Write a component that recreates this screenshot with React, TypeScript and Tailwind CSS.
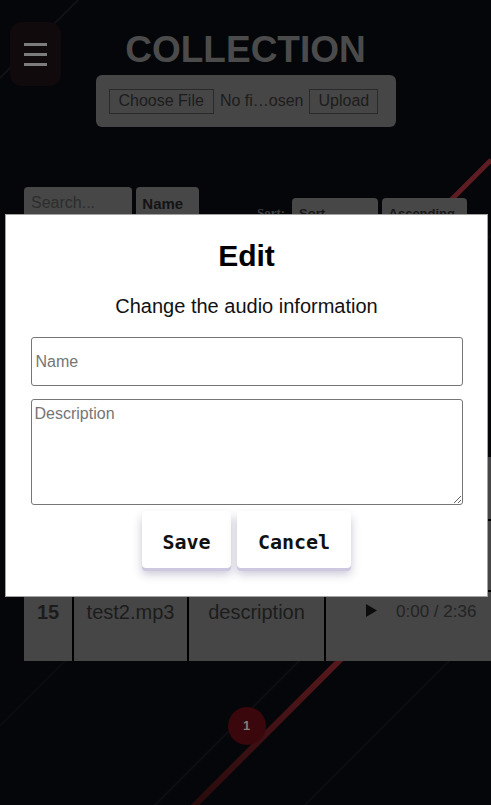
import React from "react";

const sans = { fontFamily: '"Liberation Sans", Arial, sans-serif' };

function Backdrop() {
  // diagonal streaks of the page background
  return (
    <svg className="absolute inset-0 h-full w-full" viewBox="0 0 491 805" preserveAspectRatio="none">
      <defs>
        <linearGradient id="streak" x1="360" y1="640" x2="185" y2="815" gradientUnits="userSpaceOnUse">
          <stop offset="0" stopColor="#5e1a1e" />
          <stop offset="1" stopColor="#260a0c" />
        </linearGradient>
      </defs>
      <line x1="0" y1="78" x2="80" y2="-2" stroke="#111116" strokeWidth="2" />
      <line x1="470" y1="0" x2="491" y2="-21" stroke="#111116" strokeWidth="2" />
      <line x1="0" y1="726" x2="726" y2="0" stroke="#0c0c10" strokeWidth="2" />
      <line x1="150" y1="810" x2="960" y2="0" stroke="#0e0e12" strokeWidth="2" />
      <line x1="300" y1="810" x2="1110" y2="0" stroke="#0d0d11" strokeWidth="2" />
      <line x1="491" y1="160" x2="300" y2="351" stroke="#5c1c21" strokeWidth="5" />
      <line x1="360" y1="640" x2="185" y2="815" stroke="url(#streak)" strokeWidth="6" />
    </svg>
  );
}

function EditModal() {
  return (
    <div className="absolute left-[5px] top-[214px] flex h-[383px] w-[483px] flex-col items-center border border-[#a3a3a3] bg-white" style={sans}>
      <h2 className="mt-[24px] text-[30px] font-bold leading-[34px] text-black">Edit</h2>
      <p className="mt-[22px] text-[20px] leading-[23px] text-[#111]">Change the audio information</p>
      <input
        placeholder="Name"
        className="mt-[19px] h-[49px] w-[432px] rounded-[3px] border border-[#767676] px-[4px] text-[16px] placeholder:text-[#757575]"
      />
      <textarea
        placeholder="Description"
        className="mt-[13px] h-[106px] w-[432px] rounded-[3px] border border-[#767676] px-[3px] py-[2px] text-[16px] placeholder:text-[#757575]"
      />
      <div className="mt-[6px] flex gap-[6px]" style={{ fontFamily: '"DejaVu Sans Mono", "Liberation Mono", monospace' }}>
        <button className="h-[57px] w-[89px] rounded-[4px] bg-white pt-[5px] text-[20px] font-bold text-[#111] shadow-[0_3px_0_#cdc8df,0_6px_10px_rgba(70,60,110,0.3)]">
          Save
        </button>
        <button className="h-[57px] w-[114px] rounded-[4px] bg-white pt-[5px] text-[20px] font-bold text-[#111] shadow-[0_3px_0_#cdc8df,0_6px_10px_rgba(70,60,110,0.3)]">
          Cancel
        </button>
      </div>
    </div>
  );
}

function Row({ id, name }: { id?: number; name?: string }) {
  return (
    <div className="flex h-[69px] text-[20px] leading-[24px] text-[#1c1c1c]">
      <div className="w-[48px] pt-[8px] text-center font-bold">{id}</div>
      <div className="w-[115px] border-l-2 border-black pt-[8px] text-center">{name}</div>
      <div className="w-[137px] border-l-2 border-black pt-[8px] text-center">{name ? "description" : ""}</div>
      <div className="flex flex-1 items-start gap-[19px] border-l-2 border-black pl-[40px] pt-[8px] text-[17px]">
        {name && (
          <>
            <svg width="11" height="13" viewBox="0 0 11 13" className="mt-[4px]">
              <path d="M0 0 L11 6.5 L0 13 Z" fill="#0c0c0c" />
            </svg>
            <span className="whitespace-nowrap text-[#232323]">0:00 / 2:36</span>
          </>
        )}
      </div>
    </div>
  );
}

export default function App() {
  return (
    <div className="relative h-[805px] w-[491px] overflow-hidden bg-[#050609]" style={sans}>
      <Backdrop />

      <div className="relative flex flex-col">
        <div className="flex items-start pt-[22px]">
          <div className="ml-[10px] flex h-[64px] w-[51px] flex-col items-center justify-center gap-[7px] rounded-xl bg-[#100a0c]">
            <span className="h-[3px] w-[23px] bg-[#7c7c7c]" />
            <span className="h-[3px] w-[23px] bg-[#7c7c7c]" />
            <span className="h-[3px] w-[23px] bg-[#7c7c7c]" />
          </div>
          <div className="flex flex-1 flex-col items-center">
            <h1 className="mt-[9px] text-[37px] font-bold leading-[37px] text-[#4b4b4b]">COLLECTION</h1>
            <div className="mt-[7px] flex h-[52px] w-[300px] items-center gap-[6px] rounded-md bg-[#464646] px-[13px] text-[16px] text-[#1c1c1c]">
              <span className="flex h-[25px] items-center border border-[#2a2a2a] px-[9px]">Choose File</span>
              <span className="whitespace-nowrap">No fi…osen</span>
              <span className="flex h-[25px] items-center border border-[#2a2a2a] px-[8px]">Upload</span>
            </div>
          </div>
          <div className="w-[61px]" />
        </div>

        <div className="mt-[60px] flex items-start px-[24px]">
          <div className="flex h-[32px] w-[109px] items-center rounded-t-[4px] bg-[#474747] pl-[7px] text-[16px] text-[#2d2d2d]">Search...</div>
          <div className="ml-[4px] flex h-[32px] w-[63px] items-start rounded-t-[4px] bg-[#474747] pl-[6px] pt-[6px] text-[15px] font-bold text-[#141414]">Name</div>
          <span className="ml-[58px] mt-[16px] text-[13px] font-bold text-[#3f3f3f]" style={{ fontFamily: '"Liberation Serif", serif' }}>Sort:</span>
          <div className="ml-[7px] mt-[11px] h-[25px] w-[86px] rounded-t-[4px] bg-[#474747] pl-[7px] pt-[6px] text-[13px] font-bold text-[#161616]">Sort</div>
          <div className="ml-[4px] mt-[11px] h-[25px] w-[86px] rounded-t-[4px] bg-[#474747] pl-[7px] pt-[6px] text-[13px] font-bold text-[#161616]">Ascending</div>
        </div>

        <div className="ml-[24px] mt-[234px] flex flex-col bg-[#464646]">
          <div className="h-[64px] border-b-2 border-black" />
          <div className="border-b-2 border-black">
            <Row />
          </div>
          <Row id={15} name="test2.mp3" />
        </div>

        <div className="mt-[46px] flex justify-center">
          <div className="ml-[2px] flex h-[38px] w-[38px] items-center justify-center rounded-full bg-[#3a070c] text-[13px] font-bold text-[#7e7e7e]">1</div>
        </div>
      </div>

      <EditModal />
    </div>
  );
}
